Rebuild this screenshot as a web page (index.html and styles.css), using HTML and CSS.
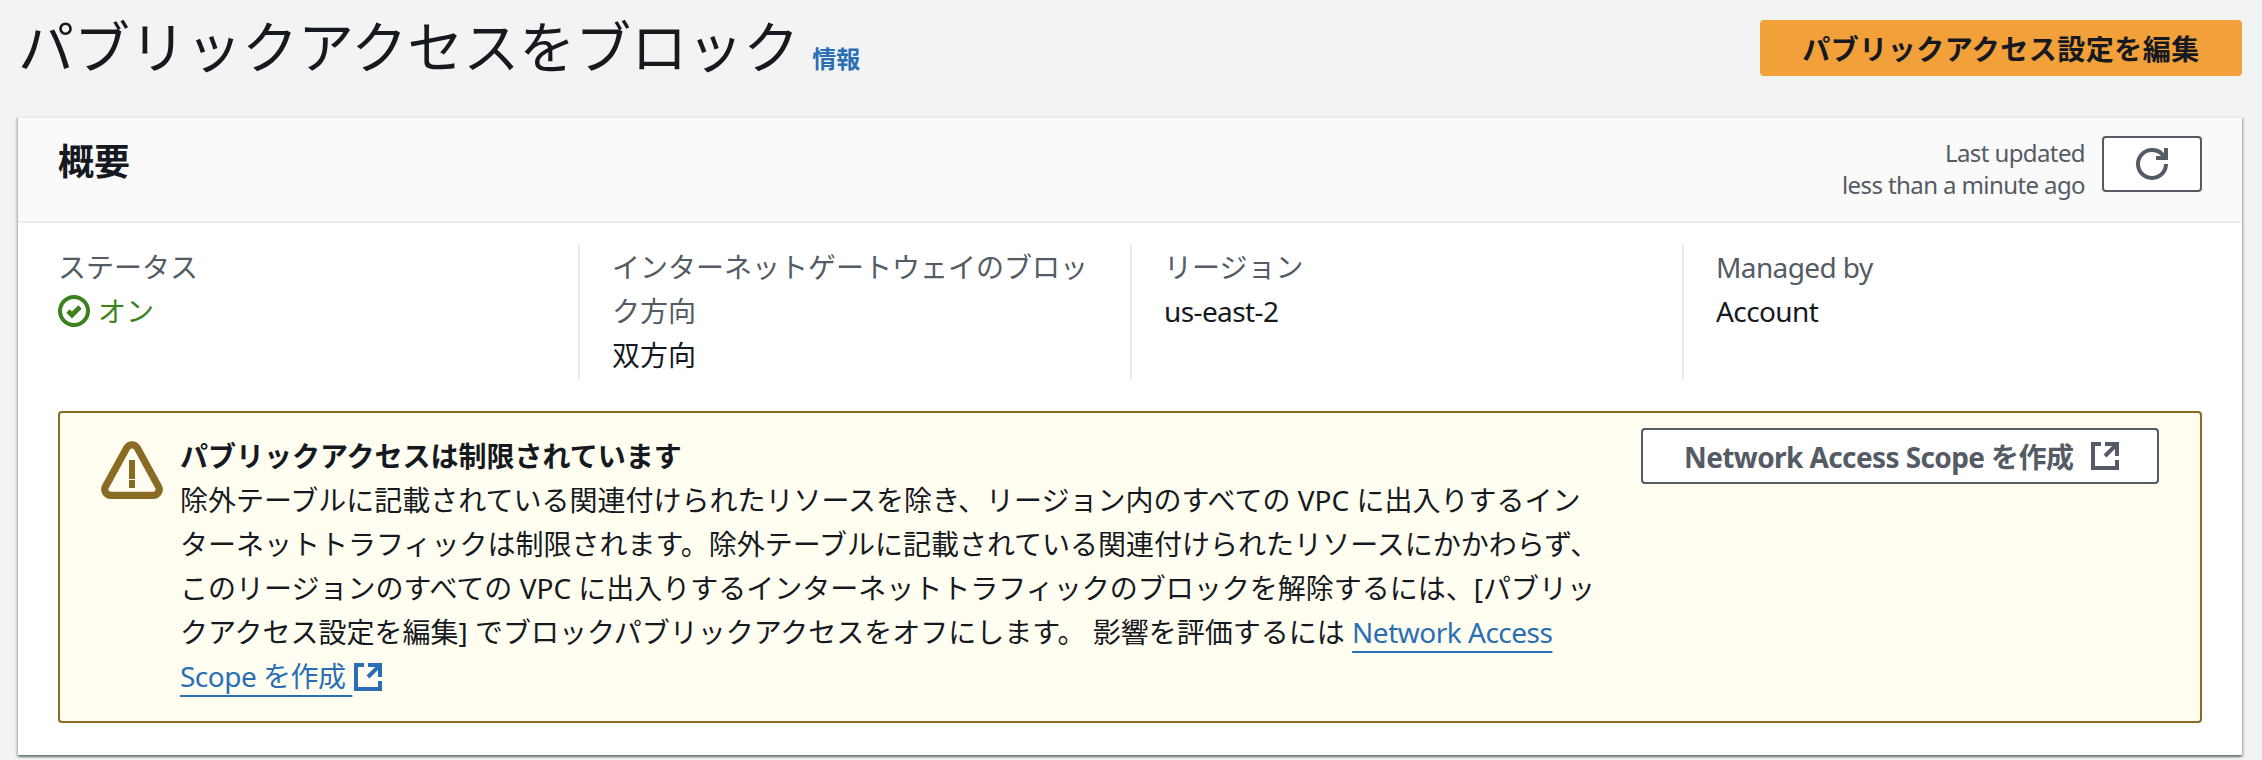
FILE: index.html
```html
<!DOCTYPE html>
<html lang="ja">
<head>
    <meta charset="UTF-8">
    <title>パブリックアクセスをブロック</title>
    <link rel="stylesheet" href="styles.css">
</head>
<body>

    <div class="page-head">
        <div class="page-title">
            <h1>パブリックアクセスをブロック</h1>
            <a class="info-link" href="#">情報</a>
        </div>
        <button class="btn-primary">パブリックアクセス設定を編集</button>
    </div>

    <div class="card">
        <div class="card-head">
            <h2>概要</h2>
            <div class="card-actions">
                <div class="updated lat">Last updated<br>less than a minute ago</div>
                <button class="btn-refresh" aria-label="refresh">
                    <svg class="icon" viewBox="0 0 16 16"><path d="M10 5h5V0"/><path d="M15 8a6.957 6.957 0 0 1-7 7 6.957 6.957 0 0 1-7-7 6.957 6.957 0 0 1 7-7 6.87 6.87 0 0 1 6.3 4"/></svg>
                </button>
            </div>
        </div>

        <div class="card-body">
            <div class="details">
                <div class="detail">
                    <div class="label">ステータス</div>
                    <div class="status-on">
                        <svg class="icon" viewBox="0 0 16 16"><circle cx="8" cy="8" r="7"/><path d="M5 8l2 2 4-4"/></svg>
                        <span>オン</span>
                    </div>
                </div>
                <div class="detail">
                    <div class="label">インターネットゲートウェイのブロック方向</div>
                    <div class="value">双方向</div>
                </div>
                <div class="detail">
                    <div class="label">リージョン</div>
                    <div class="value lat">us-east-2</div>
                </div>
                <div class="detail">
                    <div class="label lat">Managed by</div>
                    <div class="value lat">Account</div>
                </div>
            </div>

            <div class="alert">
                <svg class="alert-icon" viewBox="0 0 16 16">
                    <path class="outline" d="M6.7 1.95a1.5 1.5 0 0 1 2.6 0L14.6 11.6a1.5 1.5 0 0 1-1.3 2.25H2.7a1.5 1.5 0 0 1-1.3-2.25z"/>
                    <path class="mark" d="M7.25 5h1.5v4.75h-1.5zM7.25 10h1.5v2h-1.5z"/>
                </svg>
                <div class="alert-text">
                    <div class="alert-title">パブリックアクセスは制限されています</div>
                    <p>除外テーブルに記載されている関連付けられたリソースを除き、リージョン内のすべての VPC に出入りするインターネットトラフィックは制限されます。除外テーブルに記載されている関連付けられたリソースにかかわらず、このリージョンのすべての VPC に出入りするインターネットトラフィックのブロックを解除するには、[パブリックアクセス設定を編集] でブロックパブリックアクセスをオフにします。 影響を評価するには <a class="ext-link" href="#">Network Access Scope を作成&nbsp;</a><svg class="icon ext-icon" viewBox="0 0 16 16"><path d="M14 8.01v-6H8"/><path d="M14.02 2 8 8.01"/><path d="M6 2.01H2v12h12v-3.99"/></svg></p>
                </div>
                <button class="btn-normal">
                    <span class="lat">Network Access Scope を作成</span>
                    <svg class="icon" viewBox="0 0 16 16"><path d="M14 8.01v-6H8"/><path d="M14.02 2 8 8.01"/><path d="M6 2.01H2v12h12v-3.99"/></svg>
                </button>
            </div>
        </div>
    </div>

</body>
</html>
```

FILE: styles.css
```css
* { margin: 0; padding: 0; box-sizing: border-box; font-family: "Noto Sans", "Noto Sans CJK JP", sans-serif; }
body { background: #f2f3f3; color: #16191f; font-size: 28px; line-height: 44px; height: 760px; overflow: hidden; }
a { color: #2a6fb5; text-decoration: none; }
button { cursor: pointer; }
.lat { letter-spacing: -0.6px; }

.page-head { display: flex; justify-content: space-between; align-items: flex-start; padding: 20px 20px 0 18px; height: 116px; }
.page-title { display: flex; align-items: baseline; gap: 13px; margin-top: -2px; }
h1 { font-size: 56px; line-height: 56px; font-weight: 400; }
.info-link { font-size: 24px; line-height: 32px; font-weight: 700; }
.btn-primary { width: 482px; height: 56px; background: #f2a03a; border: none; border-radius: 4px; color: #16191f; font-size: 28px; font-weight: 700; letter-spacing: 0.5px; }

.card { margin: 0 20px 0 18px; background: #fff; border-top: 2px solid #eaeded; box-shadow: 0 2px 2px rgba(0, 28, 36, 0.4), 2px 2px 2px rgba(0, 28, 36, 0.15), -2px 2px 2px rgba(0, 28, 36, 0.15); }
.card-head { display: flex; justify-content: space-between; align-items: flex-start; padding: 18px 40px 20px; background: #fafafa; border-bottom: 2px solid #eaeded; }
h2 { font-size: 36px; line-height: 52px; font-weight: 700; }
.card-actions { display: flex; gap: 17px; }
.updated { font-size: 24px; line-height: 32px; color: #545b64; text-align: right; padding-top: 1px; }
.btn-refresh { width: 100px; height: 56px; background: #fff; border: 2px solid #545b64; border-radius: 4px; display: flex; justify-content: center; align-items: center; }

.icon { width: 32px; height: 32px; fill: none; stroke: currentColor; stroke-width: 2; flex: none; }
.btn-refresh .icon { color: #545b64; }

.card-body { padding: 22px 40px 32px; }
.details { display: grid; grid-template-columns: 520px 552px 552px 1fr; }
.detail { padding: 0 32px 2px; border-left: 2px solid #eaeded; }
.detail:first-child { padding-left: 0; border-left: none; }
.label { color: #545b64; }
.status-on { display: flex; align-items: center; gap: 8px; color: #3b821f; }
.status-on .icon path { stroke-width: 2.4; }

.alert { display: flex; align-items: flex-start; margin-top: 32px; height: 312px; padding: 21px 41px 0 40px; background: #fffef0; border: 2px solid #8a6b23; border-radius: 4px; }
.alert-icon { width: 64px; height: 64px; flex: none; margin: 6px 16px 0 0; }
.alert-icon .outline { fill: none; stroke: #8a6b23; stroke-width: 1.8; }
.alert-icon .mark { fill: #8a6b23; }
.alert-text { flex: 1; padding-right: 40px; }
.alert-title { font-weight: 700; }
.ext-link { letter-spacing: -0.5px; text-decoration: underline; text-decoration-thickness: 2px; text-underline-offset: 8px; }
.ext-icon { color: #2a6fb5; vertical-align: -6px; }

.btn-normal { display: flex; align-items: center; gap: 16px; flex: none; width: 518px; height: 56px; margin-top: -6px; padding-left: 41px; background: #fff; border: 2px solid #545b64; border-radius: 4px; color: #545b64; font-size: 28px; font-weight: 700; }
```
